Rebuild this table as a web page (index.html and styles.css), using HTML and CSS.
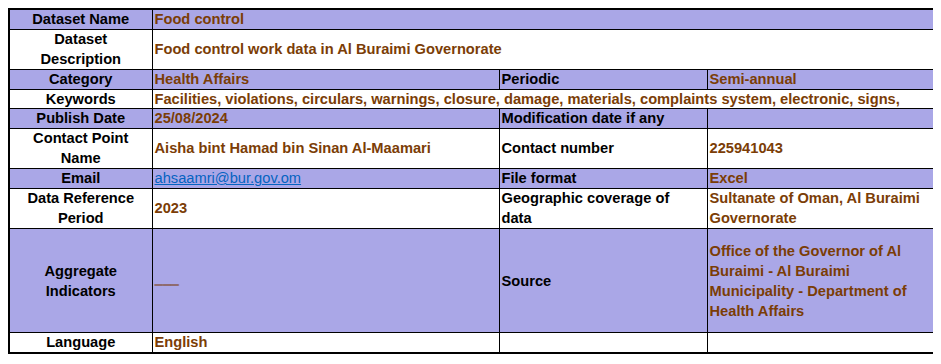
FILE: index.html
```html
<!DOCTYPE html>
<html lang="en">
<head>
<meta charset="utf-8">
<title>Dataset metadata</title>
<link rel="stylesheet" href="styles.css">
</head>
<body>
<table class="meta">
  <colgroup>
    <col class="c1"><col class="c2"><col class="c3"><col class="c4">
  </colgroup>
  <tbody>
    <tr class="row one alt">
      <th>Dataset Name</th>
      <td colspan="3" class="val">Food control</td>
    </tr>
    <tr class="row two">
      <th>Dataset<br>Description</th>
      <td colspan="3" class="val">Food control work data in Al Buraimi Governorate</td>
    </tr>
    <tr class="row one alt">
      <th>Category</th>
      <td class="val">Health Affairs</td>
      <td class="lab">Periodic</td>
      <td class="val">Semi-annual</td>
    </tr>
    <tr class="row kw">
      <th>Keywords</th>
      <td colspan="3" class="val">Facilities, violations, circulars, warnings, closure, damage, materials, complaints system, electronic, signs,</td>
    </tr>
    <tr class="row one alt">
      <th>Publish Date</th>
      <td class="val">25/08/2024</td>
      <td class="lab">Modification date if any</td>
      <td class="val"></td>
    </tr>
    <tr class="row two">
      <th>Contact Point<br>Name</th>
      <td class="val">Aisha bint Hamad bin Sinan Al-Maamari</td>
      <td class="lab">Contact number</td>
      <td class="val">225941043</td>
    </tr>
    <tr class="row one alt">
      <th>Email</th>
      <td class="val"><a class="mail" href="mailto:ahsaamri@bur.gov.om">ahsaamri@bur.gov.om</a></td>
      <td class="lab">File format</td>
      <td class="val">Excel</td>
    </tr>
    <tr class="row two">
      <th>Data Reference<br>Period</th>
      <td class="val">2023</td>
      <td class="lab">Geographic coverage of<br>data</td>
      <td class="val">Sultanate of Oman, Al Buraimi<br>Governorate</td>
    </tr>
    <tr class="row big alt">
      <th>Aggregate<br>Indicators</th>
      <td class="val"><span class="dash">___</span></td>
      <td class="lab">Source</td>
      <td class="val">Office of the Governor of Al<br>Buraimi - Al Buraimi<br>Municipality - Department of<br>Health Affairs</td>
    </tr>
    <tr class="row one">
      <th>Language</th>
      <td class="val">English</td>
      <td class="lab"></td>
      <td class="val"></td>
    </tr>
  </tbody>
</table>
</body>
</html>
```

FILE: styles.css
```css
html, body {
  background: #ffffff;
}
body {
  margin: 8px;
  font-family: "Liberation Sans", Arial, sans-serif;
  font-size: 14.67px;
  font-weight: bold;
  line-height: 19px;
}
.meta {
  border-collapse: collapse;
  table-layout: fixed;
  width: 925px;
  border: 2px solid #000;
}
.c1 { width: 143px; }
.c2 { width: 347px; }
.c3 { width: 208px; }
.c4 { width: 227px; }
.meta th,
.meta td {
  border: 1px solid #000;
  padding: 0 2px;
  vertical-align: middle;
  white-space: nowrap;
  overflow: hidden;
}
.meta th {
  text-align: center;
  color: #000;
  font-weight: bold;
}
.meta td {
  text-align: left;
}
.val {
  color: #7b3d06;
}
.lab {
  color: #000;
}
.alt {
  background: #aaa7e7;
}
.one { height: 19px; }
.kw { height: 18px; line-height: 18px; }
.two { height: 39px; line-height: 19.5px; }
.big { height: 104px; line-height: 20px; }
.mail {
  color: #0563c1;
  font-weight: normal;
  text-decoration: underline;
}
.dash {
  vertical-align: 3px;
  text-shadow: 0 -1px 0 currentColor;
}
```
